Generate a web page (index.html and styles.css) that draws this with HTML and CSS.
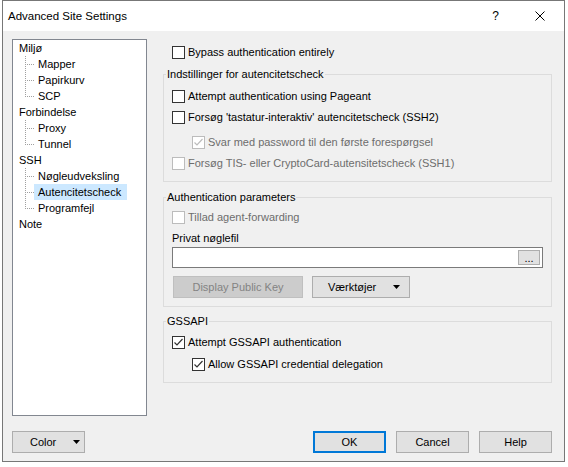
FILE: index.html
```html
<!DOCTYPE html>
<html>
<head>
	<meta charset="utf-8">
	<link rel="stylesheet" href="styles.css">
	<title>Advanced Site Settings</title>
</head>
<body>
	<div class="window">
		<div class="titlebar">
			<span class="title">Advanced Site Settings</span>
			<span class="help">?</span>
			<span class="close">
				<svg width="10" height="10" viewBox="0 0 10 10"><path d="M0.5 0.5L9.5 9.5M9.5 0.5L0.5 9.5" stroke="#000" stroke-width="1"/></svg>
			</span>
		</div>
		<div class="dialog">
			<div class="main">
				<ul class="tree">
					<li><span>Miljø</span>
						<ul>
							<li><span>Mapper</span></li>
							<li><span>Papirkurv</span></li>
							<li><span>SCP</span></li>
						</ul>
					</li>
					<li><span>Forbindelse</span>
						<ul>
							<li><span>Proxy</span></li>
							<li><span>Tunnel</span></li>
						</ul>
					</li>
					<li><span>SSH</span>
						<ul>
							<li><span>Nøgleudveksling</span></li>
							<li><span class="selected">Autencitetscheck</span></li>
							<li><span>Programfejl</span></li>
						</ul>
					</li>
					<li><span>Note</span></li>
				</ul>

				<div class="panel">
					<label class="check bypass"><span class="box"></span>Bypass authentication entirely</label>

					<fieldset class="group auth">
						<legend>Indstillinger for autencitetscheck</legend>
						<label class="check r1"><span class="box"></span>Attempt authentication using Pageant</label>
						<label class="check r2"><span class="box"></span>Forsøg 'tastatur-interaktiv' autencitetscheck (SSH2)</label>
						<label class="check r3 sub off"><span class="box"><svg width="11" height="11" viewBox="0 0 11 11"><polyline points="1.5,5.5 4,8 9.5,2" fill="none" stroke="#bcbcbc" stroke-width="1.2"/></svg></span>Svar med password til den første forespørgsel</label>
						<label class="check r2 off"><span class="box"></span>Forsøg TIS- eller CryptoCard-autensitetscheck (SSH1)</label>
					</fieldset>

					<fieldset class="group params">
						<legend>Authentication parameters</legend>
						<label class="check r1 off"><span class="box"></span>Tillad agent-forwarding</label>
						<div class="field-label">Privat nøglefil</div>
						<div class="keyfile"><span class="browse">...</span></div>
						<div class="key-buttons">
							<span class="btn disabled pubkey">Display Public Key</span>
							<span class="btn dropdown tools">Værktøjer<svg class="arrow" width="7" height="4" viewBox="0 0 7 4"><polygon points="0,0 7,0 3.5,4" fill="#000"/></svg></span>
						</div>
					</fieldset>

					<fieldset class="group gssapi">
						<legend>GSSAPI</legend>
						<label class="check r4"><span class="box"><svg width="11" height="11" viewBox="0 0 11 11"><polyline points="1.5,5.5 4,8 9.5,2" fill="none" stroke="#333" stroke-width="1.2"/></svg></span>Attempt GSSAPI authentication</label>
						<label class="check r4 sub"><span class="box"><svg width="11" height="11" viewBox="0 0 11 11"><polyline points="1.5,5.5 4,8 9.5,2" fill="none" stroke="#333" stroke-width="1.2"/></svg></span>Allow GSSAPI credential delegation</label>
					</fieldset>
				</div>
			</div>

			<div class="footer">
				<span class="btn dropdown color">Color<svg class="arrow" width="7" height="4" viewBox="0 0 7 4"><polygon points="0,0 7,0 3.5,4" fill="#000"/></svg></span>
				<span class="btn default ok">OK</span>
				<span class="btn">Cancel</span>
				<span class="btn">Help</span>
			</div>
		</div>
	</div>
</body>
</html>
```

FILE: styles.css
```css
html, body {
	margin: 0;
	background: #fff;
}
body {
	font-family: "Liberation Sans", Arial, sans-serif;
	font-size: 11px;
	color: #000;
}

.window {
	box-sizing: border-box;
	width: 563px;
	height: 462px;
	margin-left: 2px;
	border: 1px solid #777;
	background: #f0f0f0;
	display: flex;
	flex-direction: column;
}

.titlebar {
	height: 30px;
	flex: none;
	background: #fff;
	display: flex;
	align-items: center;
	padding-left: 5px;
	font-size: 11.5px;
}
.title {
	flex: 1;
}
.help {
	font-size: 12px;
	margin-right: 36px;
}
.close {
	display: flex;
	margin-right: 19px;
}

.dialog {
	flex: 1;
	padding: 8px 12px 8px 9px;
	display: flex;
	flex-direction: column;
}
.main {
	display: flex;
	gap: 16px;
	height: 377px;
}

/* tree view */
.tree {
	box-sizing: border-box;
	width: 135px;
	flex: none;
	margin: 0;
	padding: 0 0 0 6px;
	list-style: none;
	border: 1px solid #828790;
	background: #fff;
}
.tree li {
	line-height: 16px;
	white-space: nowrap;
}
.tree ul {
	list-style: none;
	margin: 0 0 0 6px;
	padding: 0;
}
.tree ul li {
	padding-left: 9px;
	background-image:
		repeating-linear-gradient(to bottom, #a0a0a0 0 1px, transparent 1px 2px),
		repeating-linear-gradient(to right, #a0a0a0 0 1px, transparent 1px 2px);
	background-size: 1px 100%, 8px 1px;
	background-position: 0 0, 2px 8px;
	background-repeat: no-repeat;
}
.tree ul li:last-child {
	background-size: 1px 9px, 8px 1px;
}
.tree ul span {
	display: inline-block;
	padding: 0 6px 0 4px;
}
.tree .selected {
	background: #cce8ff;
}

/* right hand panel */
.panel {
	flex: 1;
	display: flex;
	flex-direction: column;
}
.check {
	display: flex;
	align-items: center;
	height: 16px;
	white-space: nowrap;
}
.box {
	box-sizing: border-box;
	width: 13px;
	height: 13px;
	margin-right: 3px;
	border: 1px solid #333;
	background: #fff;
	display: flex;
	align-items: center;
	justify-content: center;
}
.check.sub {
	margin-left: 20px;
}
.check.off {
	color: #6d6d6d;
}
.check.off .box {
	border-color: #bcbcbc;
}
.bypass {
	margin-top: 5px;
	margin-left: 9px;
}

.group {
	margin: 0;
	padding: 0 8px;
	min-width: 0;
	border: 1px solid #dcdcdc;
}
.group legend {
	padding: 0 1px;
	margin-left: -6px;
	line-height: 14px;
}
.auth {
	margin-top: 7px;
	padding-bottom: 10px;
}
.params {
	margin-top: 8px;
	padding-bottom: 8px;
}
.gssapi {
	margin-top: 7px;
	padding-bottom: 10px;
}
.r1 { margin-top: 7px; }
.r2 { margin-top: 5px; }
.r3 { margin-top: 9px; }
.r4 { margin-top: 6px; }

.params .r1 {
	margin-top: 5px;
}
.field-label {
	margin-top: 6px;
	line-height: 14px;
}
.keyfile {
	box-sizing: border-box;
	height: 21px;
	margin-top: 2px;
	border: 1px solid #7a7a7a;
	background: #fff;
	display: flex;
	align-items: center;
	justify-content: flex-end;
	padding-right: 2px;
}
.browse {
	box-sizing: border-box;
	width: 22px;
	height: 15px;
	border: 1px solid #adadad;
	background: #e1e1e1;
	text-align: center;
	line-height: 15px;
}

/* buttons */
.btn {
	box-sizing: border-box;
	height: 22px;
	width: 73px;
	border: 1px solid #adadad;
	background: #e1e1e1;
	display: flex;
	align-items: center;
	justify-content: center;
}
.btn.disabled {
	background: #cccccc;
	border-color: #bfbfbf;
	color: #838383;
}
.btn.dropdown {
	justify-content: flex-start;
}
.btn .arrow {
	margin-left: auto;
}
.key-buttons {
	display: flex;
	gap: 9px;
	margin-top: 8px;
	margin-left: 1px;
}
.pubkey {
	width: 130px;
}
.tools {
	width: 98px;
	padding: 0 9px 0 15px;
}

.footer {
	display: flex;
	gap: 10px;
	margin-top: 15px;
}
.color {
	padding: 0 4px 0 17px;
	margin-right: auto;
}
.btn.default {
	border: 2px solid #0078d7;
}
```
